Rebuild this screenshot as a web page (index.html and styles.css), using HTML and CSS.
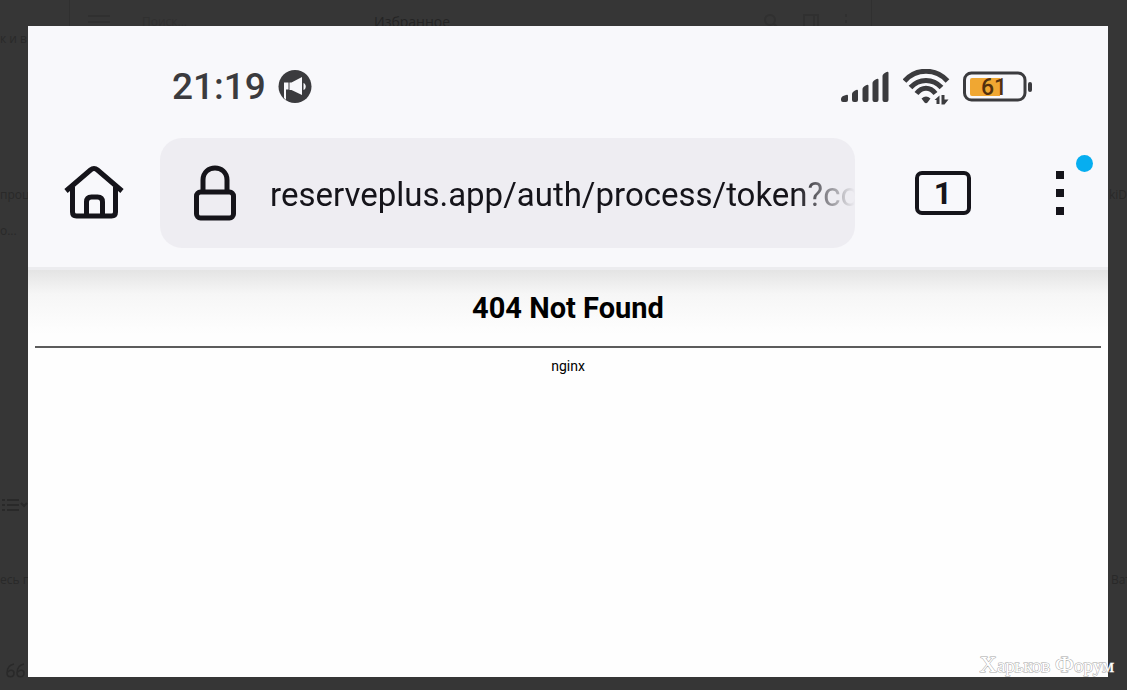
FILE: index.html
```
<!DOCTYPE html>
<html lang="ru">
<head>
    <meta charset="UTF-8">
    <meta name="viewport" content="width=device-width, initial-scale=1.0">
    <title>404 Not Found</title>
    <link rel="stylesheet" href="styles.css">
</head>
<body>
    <!-- Dimmed page under the viewer -->
    <div class="backdrop" aria-hidden="true">
        <div class="backdrop-panel"></div>
        <svg class="ghost ghost-menu" width="22" height="14" viewBox="0 0 22 14" fill="none" stroke="currentColor" stroke-width="2"><path d="M0 2h22M0 8h22"/></svg>
        <span class="ghost ghost-search">Поиск...</span>
        <span class="ghost ghost-title">Избранное</span>
        <svg class="ghost ghost-tools" width="90" height="16" viewBox="0 0 90 16" fill="none" stroke="currentColor" stroke-width="2"><circle cx="7" cy="7" r="5"/><path d="M11 11l4 4M41 2h14v12H41zM51 2v12M83 1v3M83 7v3M83 13v3"/></svg>
        <span class="ghost ghost-left-one">к и в</span>
        <span class="ghost ghost-left-two">проц</span>
        <span class="ghost ghost-left-three">о...</span>
        <svg class="ghost ghost-list" width="26" height="14" viewBox="0 0 26 14" fill="none" stroke="currentColor" stroke-width="2"><path d="M0 2h3M5 2h12M0 7h3M5 7h12M0 12h3M5 12h12M19 5l3 3 3-3"/></svg>
        <span class="ghost ghost-left-four">есь пр</span>
        <svg class="ghost ghost-quote" width="20" height="16" viewBox="0 0 20 16" fill="none" stroke="currentColor" stroke-width="1.500"><path d="M8 2C3 3 1 7 1 11c0 5 7 5 7 0 0-3-4-4-6-1M18 2c-5 1-7 5-7 9 0 5 7 5 7 0 0-3-4-4-6-1"/></svg>
        <span class="ghost ghost-right-one">kiD</span>
        <span class="ghost ghost-right-two">Ват</span>
    </div>

    <main class="phone">
        <header class="phone-top">
            <!-- Status bar -->
            <div class="status-bar">
                <span class="clock">21:19</span>
                <svg class="icon-notice" width="34" height="34" viewBox="0 0 34 34">
                    <circle cx="17" cy="16.500" r="16.500" fill="#3b3b3e"/>
                    <path fill="#f8f8fb" d="M6 12.500h4.500v7H8V30l-2-2zM11.500 12.500h2L24 7v18l-10.500-5h-2zM25.500 13c3 1 3 6 0 7z"/>
                </svg>
                <div class="status-icons">
                    <svg width="50" height="32" viewBox="0 0 50 32" fill="#3b3b3e">
                        <path d="M0 28q0-3 5-4 2-1 2 1v4q0 2-2 2H2q-2 0-2-2zM11 23q0-2 4-4 2-1 2 1v9q0 2-2 2h-2q-2 0-2-2zM21.500 18q0-2 4-4 2-1 2 1v14q0 2-2 2h-2q-2 0-2-2zM31.500 12q0-2 4-4 2-1 2 1v20q0 2-2 2h-2q-2 0-2-2zM41.500 5q0-2 4-4 2-1 2 1v27q0 2-2 2h-2q-2 0-2-2z"/>
                    </svg>
                    <svg width="48" height="36" viewBox="0 0 48 36" fill="none" stroke="#3b3b3e">
                        <path stroke-width="5" d="M1.500 12C13-1 33-1 44.500 12M7.500 18.500C16 9 30 9 38.500 18.500M13.500 24.500C19 17.500 27 17.500 32.500 24.500"/>
                        <path fill="#3b3b3e" stroke="none" d="M18.500 29.500q4.500-4 9 0l-3 4q-1.500 1.500-3 0zM31.500 31l5-4.500V35h-3v-4zM38.500 26h3v4.500h4l-4 5h-3z"/>
                    </svg>
                    <svg width="70" height="32" viewBox="0 0 70 32">
                        <rect x="1.500" y="2" width="60.500" height="27" rx="7" fill="none" stroke="#3b3b3e" stroke-width="3"/>
                        <rect x="65" y="11" width="4" height="10" rx="2" fill="#3b3b3e"/>
                        <path fill="#f0a732" d="M9 7h28v18H9q-2 0-2-2V9q0-2 2-2z"/>
                        <text class="battery-level" x="31" y="24" text-anchor="middle">61</text>
                    </svg>
                </div>
            </div>

            <!-- Browser toolbar -->
            <div class="toolbar">
                <button class="tool home" type="button" aria-label="Home">
                    <svg width="60" height="56" viewBox="0 0 60 56" fill="none" stroke="#15141a" stroke-width="5">
                        <path d="M2 26L26.500 5q3.500-3 7 0L58 26"/>
                        <path d="M8.500 22v25q0 4 4 4h35q4 0 4-4V22M22.500 51V37q0-5 5-5h6q5 0 5 5v14"/>
                    </svg>
                </button>
                <label class="address">
                    <svg width="42" height="56" viewBox="0 0 42 56" fill="none" stroke="#15141a" stroke-width="5">
                        <path d="M9 27V15C9-1 33-1 33 15v12"/>
                        <rect x="2.500" y="27" width="37" height="26" rx="4"/>
                    </svg>
                    <input class="url" type="text" aria-label="Address" value="reserveplus.app/auth/process/token?code">
                </label>
                <button class="tool tabs" type="button" aria-label="Tabs"><span class="tab-count">1</span></button>
                <button class="tool more" type="button" aria-label="Menu">
                    <svg width="10" height="44" viewBox="0 0 10 44" fill="#15141a"><path d="M1 0h8v8H1zM1 18h8v8H1zM1 36h8v8H1z"/></svg>
                    <span class="badge"></span>
                </button>
            </div>
        </header>

        <!-- Page content -->
        <section class="page">
            <h1>404 Not Found</h1>
            <hr>
            <p>nginx</p>
        </section>
    </main>

    <div class="watermark"><span class="initial">Х</span>арьков <span class="initial">Ф</span>орум</div>
</body>
</html>
```
FILE: styles.css
```
* {
    box-sizing: border-box;
}

body {
    position: relative;
    display: flex;
    min-height: 100vh;
    margin: 0;
    padding: 26px 19px 13px 28px;
    background: #363636;
    font-family: Roboto, sans-serif;
    overflow: hidden;
}

.backdrop {
    position: absolute;
    inset: 0;
    overflow: hidden;
    color: #292929;
    font-family: "Open Sans", sans-serif;
    font-size: 12px;
    line-height: 16px;
}

.backdrop-panel {
    width: 803px;
    height: 26px;
    margin-left: 69px;
    border: 1px solid #303030;
    border-width: 0 1px;
}

.ghost {
    position: absolute;
    white-space: nowrap;
}

.ghost-menu { left: 88px; top: 14px; color: #303030; }
.ghost-search { left: 142px; top: 14px; color: #303030; }
.ghost-title { left: 374px; top: 14px; font-size: 14px; color: #242424; }
.ghost-tools { left: 763px; top: 13px; color: #303030; }
.ghost-left-one { left: 0; top: 31px; }
.ghost-left-two { left: 0; top: 187px; }
.ghost-left-three { left: 0; top: 223px; }
.ghost-list { left: 2px; top: 498px; }
.ghost-left-four { left: 0; top: 572px; }
.ghost-quote { left: 6px; top: 662px; }
.ghost-right-one { right: 0; top: 187px; }
.ghost-right-two { right: -4px; top: 572px; }

.phone {
    position: relative;
    flex: 1;
    min-width: 0;
    background: #fefefe;
}

.phone-top {
    padding: 36px 0 19px;
    background: #f8f8fb;
    border-bottom: 3px solid #ececef;
}

/* Status bar */
.status-bar {
    display: flex;
    align-items: center;
    height: 50px;
    padding: 0 75px 0 144px;
    color: #3b3b3e;
}

.clock {
    margin-right: 12px;
    font-size: 37px;
    font-weight: 500;
    line-height: 48px;
}

.status-icons {
    display: flex;
    align-items: center;
    gap: 12px;
    margin-left: auto;
}

.battery-level {
    font-size: 23px;
    font-weight: 500;
    fill: #52300e;
}

/* Toolbar */
.toolbar {
    display: flex;
    align-items: center;
    margin-top: 26px;
}

.tool {
    display: flex;
    flex: none;
    align-items: center;
    justify-content: center;
    height: 110px;
    padding: 0;
    background: none;
    border: none;
    color: #15141a;
    font-family: inherit;
    cursor: pointer;
}

.home {
    width: 132px;
}

.address {
    display: flex;
    flex: 1;
    align-items: center;
    gap: 34px;
    min-width: 0;
    height: 110px;
    padding-left: 34px;
    background: #eeedf2;
    border-radius: 22px;
}

.address svg {
    flex: none;
}

.url {
    flex: 1;
    min-width: 0;
    height: 60px;
    padding: 2px 0 0;
    background: none;
    border: none;
    outline: none;
    color: #15141a;
    font-family: inherit;
    font-size: 33px;
    -webkit-mask-image: linear-gradient(to left, transparent, #000 60px);
    mask-image: linear-gradient(to left, transparent, #000 60px);
}

.tabs {
    width: 176px;
}

.tab-count {
    width: 56px;
    height: 44px;
    border: 4px solid #15141a;
    border-radius: 7px;
    font-size: 32px;
    font-weight: 700;
    line-height: 37px;
}

.more {
    position: relative;
    width: 58px;
    margin-right: 19px;
}

.badge {
    position: absolute;
    top: 17px;
    right: -4px;
    width: 17px;
    height: 17px;
    background: #06aef0;
    border-radius: 50%;
}

/* Page content */
.page {
    padding: 20px 7px;
    background: linear-gradient(#e4e4e4, #f6f6f6 24px, #fefefe 64px);
    color: #000;
    text-align: center;
}

.page h1 {
    margin: 0;
    font-size: 29px;
    line-height: 36px;
}

.page hr {
    height: 2px;
    margin: 20px 0 8px;
    background: #5c5c5c;
    border: none;
}

.page p {
    margin: 0;
    font-size: 14px;
    line-height: 20px;
}

.watermark {
    position: absolute;
    right: 13px;
    bottom: 10px;
    color: #fff;
    font-family: "Liberation Serif", serif;
    font-size: 19px;
    line-height: 28px;
    -webkit-text-stroke: 1px #a8a8a8;
    paint-order: stroke fill;
}

.watermark .initial {
    font-size: 24px;
}
```
